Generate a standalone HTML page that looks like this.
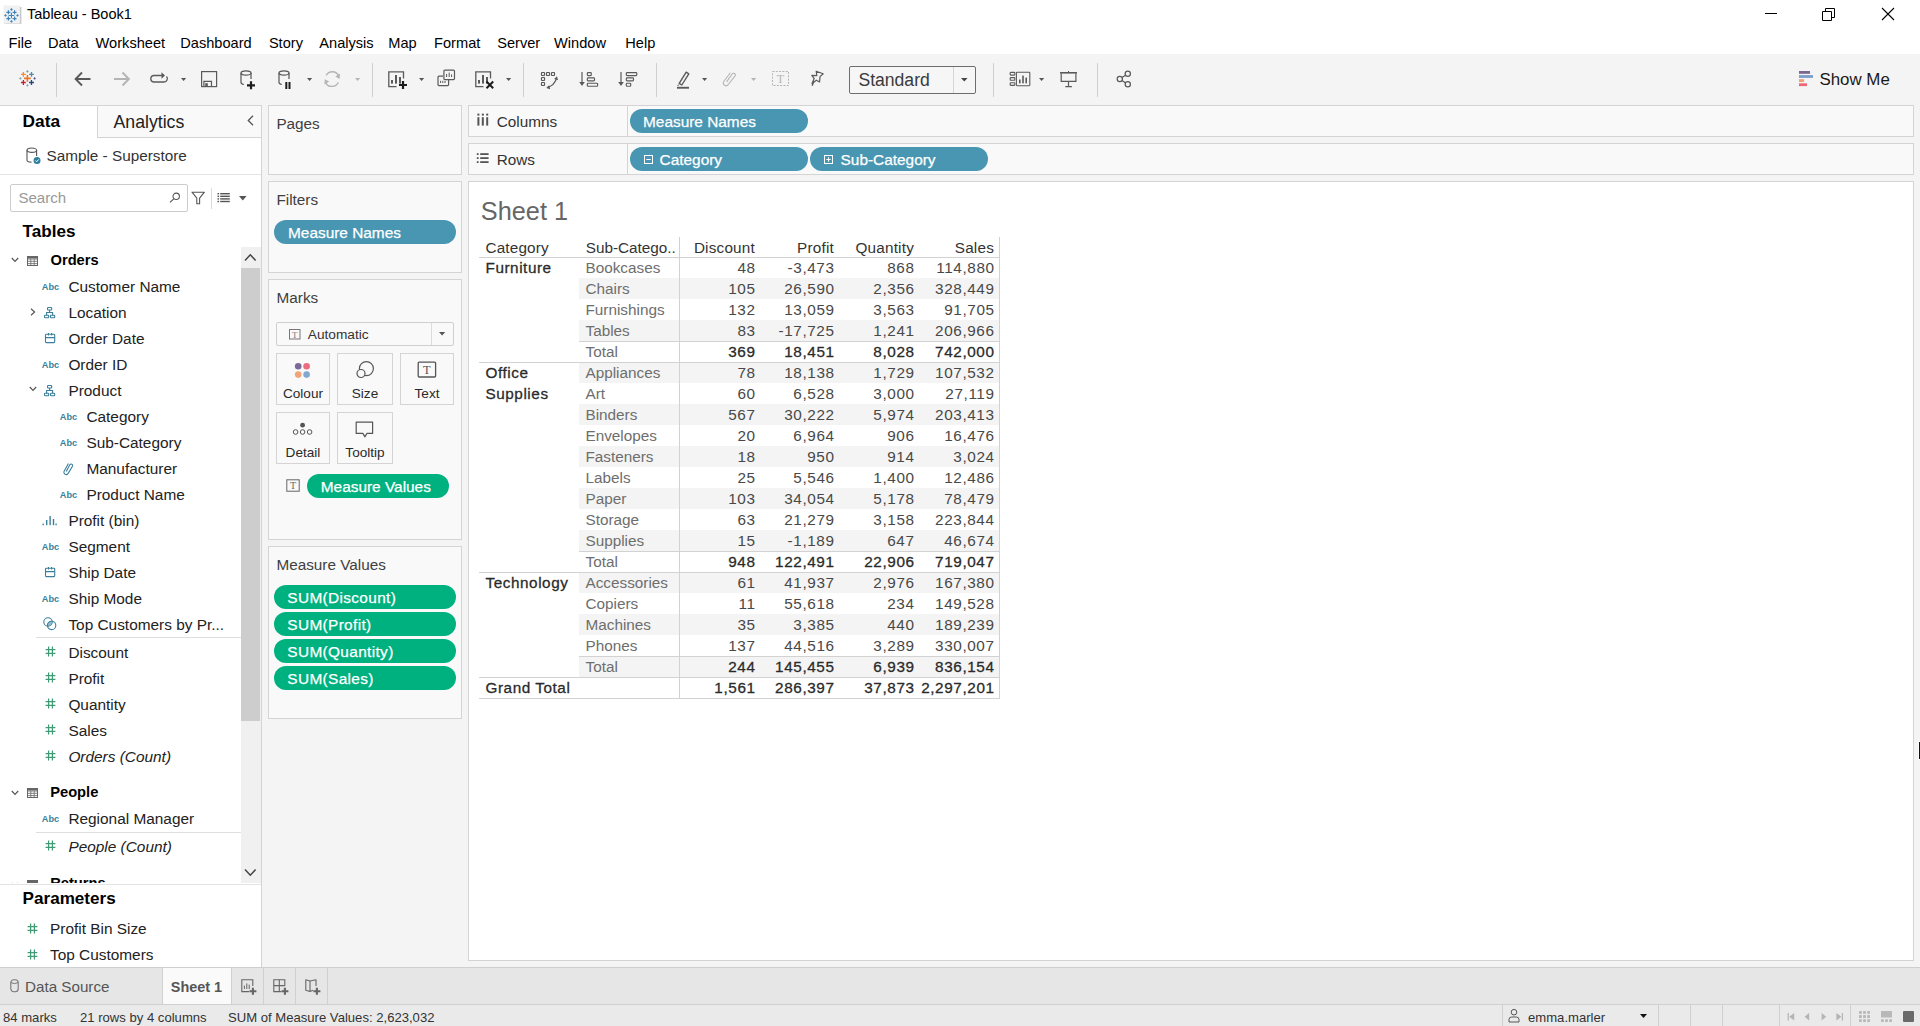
<!DOCTYPE html>
<html><head><meta charset="utf-8"><title>Tableau - Book1</title>
<style>
html,body{margin:0;padding:0;width:1920px;height:1026px;overflow:hidden;background:#ffffff;}
body{position:relative;font-family:"Liberation Sans",sans-serif;}
.t{position:absolute;white-space:nowrap;line-height:1;}
.r{position:absolute;box-sizing:border-box;}
svg.r{overflow:visible;}
</style></head><body>
<div class="r" style="left:0px;top:0px;width:1920px;height:54px;background:#ffffff;"></div>
<svg class="r" style="left:0px;top:2px;" width="24" height="24" viewBox="0 0 24 24"><rect x="4.4" y="5" width="17" height="17" fill="#bdbdbd" opacity="0.8"/><rect x="3.5" y="3.5" width="16.4" height="18" fill="#f1f1f1"/><path d="M8.66 13.46H14.260000000000002M11.46 10.66V16.26" stroke="#3c86bd" stroke-width="1.1"/><path d="M6.4 10.3H10.4M8.4 8.3V12.3" stroke="#3c86bd" stroke-width="1.2"/><path d="M12.6 10.3H16.6M14.6 8.3V12.3" stroke="#3c86bd" stroke-width="1.2"/><path d="M6.4 16.6H10.4M8.4 14.600000000000001V18.6" stroke="#3c86bd" stroke-width="1.2"/><path d="M12.6 16.6H16.6M14.6 14.600000000000001V18.6" stroke="#3c86bd" stroke-width="1.2"/><path d="M10.06 7.5L11.46 6.1L12.860000000000001 7.5L11.46 8.9Z" fill="#3c86bd"/><path d="M10.06 19.4L11.46 18.0L12.860000000000001 19.4L11.46 20.799999999999997Z" fill="#3c86bd"/><path d="M4.1 13.46L5.5 12.06L6.9 13.46L5.5 14.860000000000001Z" fill="#3c86bd"/><path d="M16.1 13.46L17.5 12.06L18.9 13.46L17.5 14.860000000000001Z" fill="#3c86bd"/></svg>
<div class="t" style="left:27px;top:7.32px;font-size:14.5px;color:#000;">Tableau - Book1</div>
<div class="r" style="left:1765px;top:13px;width:12px;height:1px;background:#000;"></div>
<svg class="r" style="left:1822px;top:8px;" width="13" height="13" viewBox="0 0 13 13"><path d="M0.5 3.5h9v9h-9z M3.5 3.5v-3h9v9h-3" fill="none" stroke="#000" stroke-width="1"/></svg>
<svg class="r" style="left:1881px;top:7px;" width="14" height="14" viewBox="0 0 14 14"><path d="M1 1L13 13M13 1L1 13" stroke="#000" stroke-width="1.1"/></svg>
<div class="t" style="left:8.5px;top:35.53px;font-size:14.6px;color:#000;">File</div>
<div class="t" style="left:47.9px;top:35.53px;font-size:14.6px;color:#000;">Data</div>
<div class="t" style="left:95.6px;top:35.53px;font-size:14.6px;color:#000;">Worksheet</div>
<div class="t" style="left:180.3px;top:35.53px;font-size:14.6px;color:#000;">Dashboard</div>
<div class="t" style="left:268.9px;top:35.53px;font-size:14.6px;color:#000;">Story</div>
<div class="t" style="left:319.3px;top:35.53px;font-size:14.6px;color:#000;">Analysis</div>
<div class="t" style="left:388.3px;top:35.53px;font-size:14.6px;color:#000;">Map</div>
<div class="t" style="left:434.1px;top:35.53px;font-size:14.6px;color:#000;">Format</div>
<div class="t" style="left:497.2px;top:35.53px;font-size:14.6px;color:#000;">Server</div>
<div class="t" style="left:554.1px;top:35.53px;font-size:14.6px;color:#000;">Window</div>
<div class="t" style="left:625.3px;top:35.53px;font-size:14.6px;color:#000;">Help</div>
<div class="r" style="left:0px;top:54px;width:1920px;height:914px;background:#f4f4f4;"></div>
<svg class="r" style="left:17px;top:68px;" width="21" height="21" viewBox="0 0 21 21"><path d="M7.0 10.4H13.8M10.4 7.0V13.8" stroke="#e8762d" stroke-width="1.6"/><path d="M4.0 6.4H8.8M6.4 4.0V8.8" stroke="#f28e2b" stroke-width="1.3"/><path d="M12.1 6.4H16.9M14.5 4.0V8.8" stroke="#4e8da6" stroke-width="1.3"/><path d="M4.0 14.5H8.8M6.4 12.1V16.9" stroke="#c72035" stroke-width="1.3"/><path d="M12.1 14.5H16.9M14.5 12.1V16.9" stroke="#1f447e" stroke-width="1.3"/><path d="M9.1 3.4L10.4 2.0999999999999996L11.700000000000001 3.4L10.4 4.7Z" fill="#6e9fb0"/><path d="M9.1 17.4L10.4 16.099999999999998L11.700000000000001 17.4L10.4 18.7Z" fill="#8fa2c4"/><path d="M2.0999999999999996 10.4L3.4 9.1L4.7 10.4L3.4 11.700000000000001Z" fill="#7fa6b5"/><path d="M16.3 10.4L17.6 9.1L18.900000000000002 10.4L17.6 11.700000000000001Z" fill="#59578e"/></svg>
<div class="r" style="left:56px;top:63px;width:1px;height:34px;background:#d0d0d0;"></div>
<svg class="r" style="left:74px;top:71px;" width="18" height="16" viewBox="0 0 18 16"><path d="M16.5 8H2M8 1.5L1.6 8L8 14.5" fill="none" stroke="#595959" stroke-width="1.9"/></svg>
<svg class="r" style="left:113px;top:71px;" width="18" height="16" viewBox="0 0 18 16"><path d="M1 8H15.5M9.5 1.5L15.9 8L9.5 14.5" fill="none" stroke="#b4b4b4" stroke-width="1.9"/></svg>
<svg class="r" style="left:149px;top:71px;" width="21" height="13" viewBox="0 0 21 13"><path d="M13 4.5H4.5A3.3 3.3 0 0 0 4.5 11H15A3.3 3.3 0 0 0 17.5 5.5" fill="none" stroke="#5a5a5a" stroke-width="1.3"/><path d="M12.5 1.2L16 4.5L12.5 7.8Z" fill="#5a5a5a"/></svg>
<svg class="r" style="left:181px;top:78px;" width="5.2" height="3" viewBox="0 0 5.2 3"><path d="M0 0H5.2L2.6 3Z" fill="#555555"/></svg>
<svg class="r" style="left:200px;top:70px;" width="18" height="18" viewBox="0 0 18 18"><rect x="1.6" y="1.6" width="15" height="15" fill="none" stroke="#5a5a5a" stroke-width="1.2"/><path d="M3.9 16.6V11.4H11.5V16.6" fill="none" stroke="#5a5a5a" stroke-width="1.2"/><rect x="5.2" y="13.2" width="2.6" height="3" fill="#5a5a5a"/></svg>
<svg class="r" style="left:240px;top:70px;" width="17" height="20" viewBox="0 0 17 20"><ellipse cx="6" cy="3" rx="5" ry="2.2" fill="none" stroke="#555" stroke-width="1.2"/><path d="M1 3V12.5A5 2.2 0 0 0 3.8 14.5M11 3V9" fill="none" stroke="#555" stroke-width="1.2"/><path d="M7 15.3H15M11 11.3V19.3" stroke="#1c1c1c" stroke-width="2.2"/></svg>
<svg class="r" style="left:278px;top:70px;" width="15" height="20" viewBox="0 0 15 20"><ellipse cx="6" cy="3" rx="5" ry="2.2" fill="none" stroke="#555" stroke-width="1.2"/><path d="M1 3V12.5A5 2.2 0 0 0 3.8 14.5M11 3V9" fill="none" stroke="#555" stroke-width="1.2"/><rect x="7.3" y="12" width="2" height="7" fill="#1c1c1c"/><rect x="10.5" y="12" width="2" height="7" fill="#1c1c1c"/></svg>
<svg class="r" style="left:307px;top:78px;" width="5.2" height="3" viewBox="0 0 5.2 3"><path d="M0 0H5.2L2.6 3Z" fill="#555555"/></svg>
<svg class="r" style="left:323px;top:70px;" width="19" height="18" viewBox="0 0 19 18"><path d="M3.2 5.4A7 7 0 0 1 15.6 5.6M15.3 12.2A7 7 0 0 1 2.6 12.6" fill="none" stroke="#b4b4b4" stroke-width="1.3"/><path d="M17 3.6L16.6 9L12.4 6.6Z M1.5 14.5L1.7 9.2L6.2 11.4Z" fill="#b4b4b4"/></svg>
<svg class="r" style="left:355px;top:78px;" width="5.2" height="3" viewBox="0 0 5.2 3"><path d="M0 0H5.2L2.6 3Z" fill="#b4b4b4"/></svg>
<div class="r" style="left:372px;top:63px;width:1px;height:34px;background:#d0d0d0;"></div>
<svg class="r" style="left:388px;top:71px;" width="20" height="19" viewBox="0 0 20 19"><path d="M8.5 15.6H0.8V0.8H15.5V7.5" fill="none" stroke="#5a5a5a" stroke-width="1.3"/><rect x="3" y="9" width="2" height="3.6" fill="#5a5a5a"/><rect x="7" y="4" width="2" height="8.6" fill="#5a5a5a"/><rect x="11" y="6" width="2" height="6.6" fill="#5a5a5a"/><path d="M11 14H19M15 10V18" stroke="#1c1c1c" stroke-width="2.2"/></svg>
<svg class="r" style="left:419px;top:78px;" width="5.2" height="3" viewBox="0 0 5.2 3"><path d="M0 0H5.2L2.6 3Z" fill="#555555"/></svg>
<svg class="r" style="left:437px;top:69px;" width="19" height="18" viewBox="0 0 19 18"><rect x="6.9" y="1.2" width="10.6" height="9.4" rx="1" fill="none" stroke="#5a5a5a" stroke-width="1.2"/><path d="M6 7.2H2a1 1 0 0 0-1 1V15.6a1 1 0 0 0 1 1H10.6a1 1 0 0 0 1-1V10.6" fill="none" stroke="#5a5a5a" stroke-width="1.2"/><path d="M9.6 8V5M12.2 8V3.6M14.6 8V5.4M3.6 14V11.8M5.8 14V11.8M8 14V11.8" stroke="#5a5a5a" stroke-width="1"/></svg>
<svg class="r" style="left:475px;top:71px;" width="20" height="19" viewBox="0 0 20 19"><path d="M8.5 15.6H0.8V0.8H15.5V7.5" fill="none" stroke="#5a5a5a" stroke-width="1.3"/><rect x="3" y="9" width="2" height="3.6" fill="#5a5a5a"/><rect x="7" y="4" width="2" height="8.6" fill="#5a5a5a"/><rect x="11" y="6" width="2" height="6.6" fill="#5a5a5a"/><path d="M11.5 10.5L18.2 17.2M18.2 10.5L11.5 17.2" stroke="#1c1c1c" stroke-width="2"/></svg>
<svg class="r" style="left:506px;top:78px;" width="5.2" height="3" viewBox="0 0 5.2 3"><path d="M0 0H5.2L2.6 3Z" fill="#555555"/></svg>
<div class="r" style="left:523px;top:63px;width:1px;height:34px;background:#d0d0d0;"></div>
<svg class="r" style="left:540px;top:71px;" width="19" height="19" viewBox="0 0 19 19"><rect x="1.5" y="1.5" width="3" height="3" fill="none" stroke="#5a5a5a" stroke-width="1.2" rx="0.5"/><rect x="6.5" y="1.5" width="3" height="3" fill="none" stroke="#5a5a5a" stroke-width="1.2" rx="0.5"/><rect x="11.5" y="1.5" width="3" height="3" fill="none" stroke="#5a5a5a" stroke-width="1.2" rx="0.5"/><rect x="1.5" y="6.5" width="3" height="3" fill="none" stroke="#5a5a5a" stroke-width="1.2" rx="0.5"/><rect x="1.5" y="11.5" width="3" height="3" fill="none" stroke="#5a5a5a" stroke-width="1.2" rx="0.5"/><path d="M7.6 16.4Q14.2 14.4 16.4 7.6" fill="none" stroke="#5a5a5a" stroke-width="1.3"/><path d="M14.2 8L17 5.2L18 9.2Z M9.2 14.2L6.2 17L10.2 18.2Z" fill="#5a5a5a"/></svg>
<svg class="r" style="left:579px;top:71px;" width="20" height="16" viewBox="0 0 20 16"><path d="M3 1V13" stroke="#5a5a5a" stroke-width="1.2"/><path d="M0.2 11L3 15L5.8 11Z" fill="#5a5a5a"/><rect x="8.3" y="1.6" width="4" height="3" rx="0.8" fill="none" stroke="#5a5a5a" stroke-width="1.15"/><rect x="8.3" y="6.9" width="7.2" height="3" rx="0.8" fill="none" stroke="#5a5a5a" stroke-width="1.15"/><rect x="8.3" y="12.2" width="10.3" height="3" rx="0.8" fill="none" stroke="#5a5a5a" stroke-width="1.15"/></svg>
<svg class="r" style="left:618px;top:71px;" width="20" height="16" viewBox="0 0 20 16"><path d="M3 1V13" stroke="#5a5a5a" stroke-width="1.2"/><path d="M0.2 11L3 15L5.8 11Z" fill="#5a5a5a"/><rect x="8.3" y="1.6" width="10.5" height="3" rx="0.8" fill="none" stroke="#5a5a5a" stroke-width="1.15"/><rect x="8.3" y="6.9" width="7.2" height="3" rx="0.8" fill="none" stroke="#5a5a5a" stroke-width="1.15"/><rect x="8.3" y="12.2" width="4.4" height="3" rx="0.8" fill="none" stroke="#5a5a5a" stroke-width="1.15"/></svg>
<div class="r" style="left:656px;top:63px;width:1px;height:34px;background:#d0d0d0;"></div>
<svg class="r" style="left:676px;top:70px;" width="14" height="20" viewBox="0 0 14 20"><path d="M3.2 13.4L10.2 2.2L12.8 3.8L5.8 15Z" fill="none" stroke="#5a5a5a" stroke-width="1.4" stroke-linejoin="round"/><path d="M2.6 14.5L1.6 16" stroke="#5a5a5a" stroke-width="1"/><rect x="1" y="16.8" width="12" height="1.9" fill="#5a5a5a"/></svg>
<svg class="r" style="left:702px;top:78px;" width="5.2" height="3" viewBox="0 0 5.2 3"><path d="M0 0H5.2L2.6 3Z" fill="#555555"/></svg>
<svg class="r" style="left:722px;top:70px;" width="14" height="17" viewBox="0 0 14 17"><path d="M5.2 12.2L9.6 3.6A1.7 1.7 0 0 1 12.7 5L7.2 14.5A2.7 2.7 0 0 1 2.3 12.2L7.6 2.6" fill="none" stroke="#b4b4b4" stroke-width="1.1" transform="rotate(8 7 8)"/></svg>
<svg class="r" style="left:751px;top:78px;" width="5.2" height="3" viewBox="0 0 5.2 3"><path d="M0 0H5.2L2.6 3Z" fill="#b4b4b4"/></svg>
<svg class="r" style="left:771px;top:70px;" width="19" height="17" viewBox="0 0 19 17"><rect x="1.5" y="1.5" width="16" height="14" fill="none" stroke="#b4b4b4" stroke-width="1" stroke-dasharray="2 1.3"/><text x="9.5" y="12.6" text-anchor="middle" font-family="Liberation Serif" font-size="12" fill="#b4b4b4">T</text></svg>
<svg class="r" style="left:810px;top:70px;" width="15" height="17" viewBox="0 0 15 17"><path d="M6.2 1.2L13.2 3.8L10 6.6L9.6 12L6.4 10.2L2 13.6L4.2 8.6L1.8 5.4L6.8 5.6Z" fill="none" stroke="#5a5a5a" stroke-width="1.2" stroke-linejoin="round"/><path d="M4 10.8L2.2 15.8" stroke="#5a5a5a" stroke-width="1.3"/></svg>
<div class="r" style="left:849px;top:66px;width:127px;height:28px;background:#f6f6f6;border:1px solid #6e6e6e;box-sizing:border-box;border-radius:2px;"></div>
<div class="r" style="left:953px;top:67px;width:1px;height:26px;background:#d6d6d6;"></div>
<div class="t" style="left:858.4px;top:71.99px;font-size:17.6px;color:#3a3a3a;">Standard</div>
<svg class="r" style="left:961px;top:78.4px;" width="6.6" height="3.4" viewBox="0 0 6.6 3.4"><path d="M0 0H6.6L3.3 3.4Z" fill="#444"/></svg>
<div class="r" style="left:993px;top:63px;width:1px;height:34px;background:#d0d0d0;"></div>
<svg class="r" style="left:1009px;top:71px;" width="22" height="16" viewBox="0 0 22 16"><g fill="none" stroke="#5a5a5a" stroke-width="1.1"><rect x="1.2" y="1.4" width="4.6" height="2.7" rx="0.6"/><rect x="1.2" y="6.6" width="4.6" height="2.7" rx="0.6"/><rect x="1.2" y="11.7" width="4.6" height="2.7" rx="0.6"/><rect x="7.4" y="1.2" width="13.4" height="13.5" rx="0.6"/></g><rect x="10" y="8.5" width="1.6" height="3.8" fill="#5a5a5a"/><rect x="13.2" y="4.6" width="1.6" height="7.7" fill="#5a5a5a"/><rect x="16.4" y="6.6" width="1.6" height="5.7" fill="#5a5a5a"/></svg>
<svg class="r" style="left:1039px;top:78px;" width="5.2" height="3" viewBox="0 0 5.2 3"><path d="M0 0H5.2L2.6 3Z" fill="#555555"/></svg>
<svg class="r" style="left:1059px;top:70px;" width="19" height="18" viewBox="0 0 19 18"><rect x="1" y="2" width="17" height="1.6" fill="#5a5a5a"/><path d="M2.2 3.4V11.3H16.9V3.4M9.5 11.3V16.6M6.3 16.6H12.9" fill="none" stroke="#5a5a5a" stroke-width="1.2"/><path d="M9.5 1V2" stroke="#5a5a5a" stroke-width="1"/></svg>
<div class="r" style="left:1097px;top:63px;width:1px;height:34px;background:#d0d0d0;"></div>
<svg class="r" style="left:1116px;top:70px;" width="16" height="18" viewBox="0 0 16 18"><g fill="none" stroke="#5a5a5a" stroke-width="1.25"><circle cx="11.8" cy="3.8" r="2.6"/><circle cx="3.8" cy="9" r="2.6"/><circle cx="11.8" cy="14.3" r="2.6"/><path d="M6 7.6L9.6 5.2M6 10.4L9.6 12.9"/></g></svg>
<svg class="r" style="left:1799px;top:71px;" width="16" height="16" viewBox="0 0 16 16"><rect x="0" y="0" width="11" height="2.8" fill="#7a6892"/><rect x="0" y="4.1" width="14" height="2.8" fill="#7b9fca"/><rect x="0" y="8.2" width="5" height="2.8" fill="#f0a072"/><rect x="0" y="12.3" width="8" height="2.8" fill="#ee6577"/></svg>
<div class="t" style="left:1819.4px;top:72.09px;font-size:16.9px;color:#1a1a1a;">Show Me</div>
<div class="r" style="left:0px;top:105px;width:262px;height:1px;background:#d4d4d4;"></div>
<div class="r" style="left:0px;top:106px;width:261px;height:861px;background:#ffffff;"></div>
<div class="r" style="left:261px;top:105px;width:1px;height:862px;background:#d4d4d4;"></div>
<div class="r" style="left:97px;top:106px;width:164px;height:31px;background:#f9f9f9;"></div>
<div class="r" style="left:97px;top:106px;width:1px;height:32px;background:#d4d4d4;"></div>
<div class="r" style="left:97px;top:137px;width:164px;height:1px;background:#d4d4d4;"></div>
<div class="t" style="left:22.6px;top:112.85px;font-size:17.3px;color:#000;font-weight:700;">Data</div>
<div class="t" style="left:113.5px;top:114.21px;font-size:17.7px;color:#222;">Analytics</div>
<svg class="r" style="left:247px;top:115px;" width="7" height="11" viewBox="0 0 7 11"><path d="M6 0.8L1.3 5.5L6 10.2" fill="none" stroke="#555" stroke-width="1.3"/></svg>
<svg class="r" style="left:26px;top:147px;" width="15" height="17" viewBox="0 0 15 17"><path d="M1 3.2V13.2A4.8 1.9 0 0 0 5.5 15.1M10.6 3.2V9" fill="none" stroke="#555" stroke-width="1.1"/><ellipse cx="5.8" cy="3.2" rx="4.8" ry="2.2" fill="none" stroke="#555" stroke-width="1.1"/><circle cx="11" cy="13.5" r="3.5" fill="#2e7ea0"/><path d="M9.3 13.5L10.6 14.8L12.8 12.4" fill="none" stroke="#fff" stroke-width="1"/></svg>
<div class="t" style="left:46.5px;top:147.64px;font-size:15.3px;color:#333;">Sample - Superstore</div>
<div class="r" style="left:0px;top:174px;width:261px;height:1px;background:#e3e3e3;"></div>
<div class="r" style="left:10px;top:184px;width:178px;height:28px;background:#ffffff;border:1px solid #cccccc;box-sizing:border-box;border-radius:2px;"></div>
<div class="t" style="left:18.4px;top:190.21px;font-size:15.1px;color:#999;">Search</div>
<svg class="r" style="left:169px;top:192px;" width="12" height="11" viewBox="0 0 12 11"><circle cx="7.2" cy="4.3" r="3.2" fill="none" stroke="#555" stroke-width="1.1"/><path d="M5 6.6L1 10.4" stroke="#555" stroke-width="1.2"/></svg>
<svg class="r" style="left:191px;top:191px;" width="15" height="14" viewBox="0 0 15 14"><path d="M1 1.2H13.4L8.6 7.2V12.8H5.8V7.2Z" fill="none" stroke="#555" stroke-width="1.1" stroke-linejoin="round"/></svg>
<div class="r" style="left:211px;top:188px;width:1px;height:21px;background:#dadada;"></div>
<svg class="r" style="left:217px;top:192px;" width="14" height="11" viewBox="0 0 14 11"><rect x="0.5" y="1" width="1.6" height="1.4" fill="#555"/><rect x="3.2" y="1" width="9.6" height="1.4" fill="#555"/><rect x="0.5" y="3.6" width="1.6" height="1.4" fill="#555"/><rect x="3.2" y="3.6" width="9.6" height="1.4" fill="#555"/><rect x="0.5" y="6.2" width="1.6" height="1.4" fill="#555"/><rect x="3.2" y="6.2" width="9.6" height="1.4" fill="#555"/><rect x="0.5" y="8.8" width="1.6" height="1.4" fill="#555"/><rect x="3.2" y="8.8" width="9.6" height="1.4" fill="#555"/></svg>
<svg class="r" style="left:238.6px;top:195.8px;" width="7.6" height="4.6" viewBox="0 0 7.6 4.6"><path d="M0 0H7.6L3.8 4.6Z" fill="#555"/></svg>
<div class="t" style="left:22.6px;top:222.72px;font-size:17.1px;color:#000;font-weight:700;">Tables</div>
<div class="r" style="left:241px;top:247px;width:20px;height:636px;background:#f0f0f0;"></div>
<div class="r" style="left:241px;top:268px;width:19px;height:453px;background:#cdcdcd;"></div>
<svg class="r" style="left:244px;top:253px;" width="13" height="9" viewBox="0 0 13 9"><path d="M1 7.4L6.3 1.8L11.6 7.4" fill="none" stroke="#444" stroke-width="1.5"/></svg>
<svg class="r" style="left:244px;top:868px;" width="13" height="9" viewBox="0 0 13 9"><path d="M1 1.6L6.3 7.2L11.6 1.6" fill="none" stroke="#444" stroke-width="1.5"/></svg>
<svg class="r" style="left:10.6px;top:257.4px;" width="8" height="6" viewBox="0 0 8 6"><path d="M0.8 1L4 4.4L7.2 1" fill="none" stroke="#555" stroke-width="1.2"/></svg>
<svg class="r" style="left:26.6px;top:255.6px;" width="11" height="10" viewBox="0 0 11 10"><g fill="none" stroke="#666" stroke-width="1"><rect x="0.5" y="0.5" width="10" height="9"/></g><path d="M0.5 3H10.5M0.5 5.3H10.5M0.5 7.6H10.5M3.8 3V9.5M7.2 3V9.5" stroke="#666" stroke-width="0.8"/><rect x="0.5" y="0.5" width="10" height="2" fill="#666"/></svg>
<div class="t" style="left:50.5px;top:252.55px;font-size:14.7px;color:#000;font-weight:700;">Orders</div>
<div class="t" style="left:41.8px;top:282.61px;font-size:9.2px;color:#3a7f9c;font-weight:700;letter-spacing:0px;">Abc</div>
<div class="t" style="left:68.4px;top:278.96px;font-size:15.4px;color:#222;">Customer Name</div>
<svg class="r" style="left:44px;top:307px;" width="12" height="12" viewBox="0 0 12 12"><g fill="none" stroke="#3a7f9c" stroke-width="1.1"><rect x="3.5" y="0.5" width="4.2" height="2.5" rx="0.7"/><rect x="0.5" y="8.3" width="4.2" height="2.4" rx="0.7"/><rect x="6.5" y="8.3" width="4.2" height="2.4" rx="0.7"/><path d="M5.6 3V5.5M2.6 8.3V5.5H8.6V8.3"/></g></svg>
<div class="t" style="left:68.4px;top:304.96px;font-size:15.4px;color:#222;">Location</div>
<svg class="r" style="left:45px;top:333px;" width="11" height="11" viewBox="0 0 11 11"><g fill="none" stroke="#3a7f9c" stroke-width="1.1"><rect x="0.5" y="1.2" width="9.2" height="8.4" rx="0.8"/><path d="M0.5 4.6H9.7M3.5 0V2.4M6.6 0V2.4"/></g></svg>
<div class="t" style="left:68.4px;top:330.96px;font-size:15.4px;color:#222;">Order Date</div>
<div class="t" style="left:41.8px;top:360.61px;font-size:9.2px;color:#3a7f9c;font-weight:700;letter-spacing:0px;">Abc</div>
<div class="t" style="left:68.4px;top:356.96px;font-size:15.4px;color:#222;">Order ID</div>
<svg class="r" style="left:44px;top:385px;" width="12" height="12" viewBox="0 0 12 12"><g fill="none" stroke="#3a7f9c" stroke-width="1.1"><rect x="3.5" y="0.5" width="4.2" height="2.5" rx="0.7"/><rect x="0.5" y="8.3" width="4.2" height="2.4" rx="0.7"/><rect x="6.5" y="8.3" width="4.2" height="2.4" rx="0.7"/><path d="M5.6 3V5.5M2.6 8.3V5.5H8.6V8.3"/></g></svg>
<div class="t" style="left:68.4px;top:382.96px;font-size:15.4px;color:#222;">Product</div>
<div class="t" style="left:59.8px;top:412.61px;font-size:9.2px;color:#3a7f9c;font-weight:700;letter-spacing:0px;">Abc</div>
<div class="t" style="left:86.4px;top:408.96px;font-size:15.4px;color:#222;">Category</div>
<div class="t" style="left:59.8px;top:438.61px;font-size:9.2px;color:#3a7f9c;font-weight:700;letter-spacing:0px;">Abc</div>
<div class="t" style="left:86.4px;top:434.96px;font-size:15.4px;color:#222;">Sub-Category</div>
<svg class="r" style="left:62.4px;top:462px;" width="12" height="13" viewBox="0 0 12 13"><path d="M4.2 9.4L8 2.6A1.5 1.5 0 0 1 10.6 4L6 11.6A2.3 2.3 0 0 1 2 9.4L6.4 1.6" fill="none" stroke="#3a7f9c" stroke-width="1.1"/></svg>
<div class="t" style="left:86.4px;top:460.96px;font-size:15.4px;color:#222;">Manufacturer</div>
<div class="t" style="left:59.8px;top:490.61px;font-size:9.2px;color:#3a7f9c;font-weight:700;letter-spacing:0px;">Abc</div>
<div class="t" style="left:86.4px;top:486.96px;font-size:15.4px;color:#222;">Product Name</div>
<svg class="r" style="left:41.8px;top:515px;" width="15" height="11" viewBox="0 0 15 11"><g fill="#3a7f9c"><rect x="0.5" y="8.6" width="1.4" height="1.6"/><rect x="4" y="5" width="1.4" height="5.2"/><rect x="7.4" y="1" width="1.4" height="9.2"/><rect x="10.8" y="4" width="1.4" height="6.2"/><rect x="13.4" y="8.6" width="1.4" height="1.6"/></g></svg>
<div class="t" style="left:68.4px;top:512.96px;font-size:15.4px;color:#222;">Profit (bin)</div>
<div class="t" style="left:41.8px;top:542.61px;font-size:9.2px;color:#3a7f9c;font-weight:700;letter-spacing:0px;">Abc</div>
<div class="t" style="left:68.4px;top:538.96px;font-size:15.4px;color:#222;">Segment</div>
<svg class="r" style="left:45px;top:567px;" width="11" height="11" viewBox="0 0 11 11"><g fill="none" stroke="#3a7f9c" stroke-width="1.1"><rect x="0.5" y="1.2" width="9.2" height="8.4" rx="0.8"/><path d="M0.5 4.6H9.7M3.5 0V2.4M6.6 0V2.4"/></g></svg>
<div class="t" style="left:68.4px;top:564.96px;font-size:15.4px;color:#222;">Ship Date</div>
<div class="t" style="left:41.8px;top:594.61px;font-size:9.2px;color:#3a7f9c;font-weight:700;letter-spacing:0px;">Abc</div>
<div class="t" style="left:68.4px;top:590.96px;font-size:15.4px;color:#222;">Ship Mode</div>
<svg class="r" style="left:43.4px;top:617px;" width="15" height="14" viewBox="0 0 15 14"><path d="M8.6 4.2A4.2 4.2 0 0 1 4.4 9.2A4.2 4.2 0 0 1 8.6 4.2Z" fill="#3a7f9c" opacity="0.55"/><g fill="none" stroke="#3a7f9c" stroke-width="1.1"><circle cx="5" cy="5" r="4.2"/><circle cx="8.6" cy="8.4" r="4.2"/></g></svg>
<div class="t" style="left:68.4px;top:616.96px;font-size:15.4px;color:#222;">Top Customers by Pr...</div>
<svg class="r" style="left:45.0px;top:646.4px;" width="11" height="11" viewBox="0 0 11 11"><path d="M3.6 0.5V10.5M7.4 0.5V10.5M0.6 3.6H10.4M0.6 7.3H10.4" stroke="#3f9b74" stroke-width="1.2"/></svg>
<div class="t" style="left:68.4px;top:644.96px;font-size:15.4px;color:#222;">Discount</div>
<svg class="r" style="left:45.0px;top:672.4px;" width="11" height="11" viewBox="0 0 11 11"><path d="M3.6 0.5V10.5M7.4 0.5V10.5M0.6 3.6H10.4M0.6 7.3H10.4" stroke="#3f9b74" stroke-width="1.2"/></svg>
<div class="t" style="left:68.4px;top:670.96px;font-size:15.4px;color:#222;">Profit</div>
<svg class="r" style="left:45.0px;top:698.4px;" width="11" height="11" viewBox="0 0 11 11"><path d="M3.6 0.5V10.5M7.4 0.5V10.5M0.6 3.6H10.4M0.6 7.3H10.4" stroke="#3f9b74" stroke-width="1.2"/></svg>
<div class="t" style="left:68.4px;top:696.96px;font-size:15.4px;color:#222;">Quantity</div>
<svg class="r" style="left:45.0px;top:724.4px;" width="11" height="11" viewBox="0 0 11 11"><path d="M3.6 0.5V10.5M7.4 0.5V10.5M0.6 3.6H10.4M0.6 7.3H10.4" stroke="#3f9b74" stroke-width="1.2"/></svg>
<div class="t" style="left:68.4px;top:722.96px;font-size:15.4px;color:#222;">Sales</div>
<svg class="r" style="left:45.0px;top:750.4px;" width="11" height="11" viewBox="0 0 11 11"><path d="M3.6 0.5V10.5M7.4 0.5V10.5M0.6 3.6H10.4M0.6 7.3H10.4" stroke="#3f9b74" stroke-width="1.2"/></svg>
<div class="t" style="left:68.4px;top:748.96px;font-size:15.4px;color:#222;font-style:italic;">Orders (Count)</div>
<div class="t" style="left:41.8px;top:814.61px;font-size:9.2px;color:#3a7f9c;font-weight:700;letter-spacing:0px;">Abc</div>
<div class="t" style="left:68.4px;top:810.96px;font-size:15.4px;color:#222;">Regional Manager</div>
<svg class="r" style="left:45.0px;top:840.4px;" width="11" height="11" viewBox="0 0 11 11"><path d="M3.6 0.5V10.5M7.4 0.5V10.5M0.6 3.6H10.4M0.6 7.3H10.4" stroke="#3f9b74" stroke-width="1.2"/></svg>
<div class="t" style="left:68.4px;top:838.96px;font-size:15.4px;color:#222;font-style:italic;">People (Count)</div>
<svg class="r" style="left:30px;top:308px;" width="6" height="8" viewBox="0 0 6 8"><path d="M1 0.8L4.6 4L1 7.2" fill="none" stroke="#555" stroke-width="1.2"/></svg>
<svg class="r" style="left:28.8px;top:386.4px;" width="8" height="6" viewBox="0 0 8 6"><path d="M0.8 1L4 4.4L7.2 1" fill="none" stroke="#555" stroke-width="1.2"/></svg>
<div class="r" style="left:36px;top:637px;width:205px;height:1px;background:#dedede;"></div>
<div class="r" style="left:36px;top:832px;width:205px;height:1px;background:#dedede;"></div>
<svg class="r" style="left:10.6px;top:790px;" width="8" height="6" viewBox="0 0 8 6"><path d="M0.8 1L4 4.4L7.2 1" fill="none" stroke="#555" stroke-width="1.2"/></svg>
<svg class="r" style="left:26.6px;top:788.4px;" width="11" height="10" viewBox="0 0 11 10"><g fill="none" stroke="#666" stroke-width="1"><rect x="0.5" y="0.5" width="10" height="9"/></g><path d="M0.5 3H10.5M0.5 5.3H10.5M0.5 7.6H10.5M3.8 3V9.5M7.2 3V9.5" stroke="#666" stroke-width="0.8"/><rect x="0.5" y="0.5" width="10" height="2" fill="#666"/></svg>
<div class="t" style="left:50.2px;top:785.25px;font-size:14.7px;color:#000;font-weight:700;">People</div>
<div class="r" style="left:0;top:870px;width:241px;height:13px;overflow:hidden">
<div class="t" style="left:50.2px;top:6.45px;font-size:14.7px;color:#000;font-weight:700">Returns</div>
<svg class="r" style="left:10.6px;top:11.5px" width="8" height="6" viewBox="0 0 8 6"><path d="M0.8 1L4 4.4L7.2 1" fill="none" stroke="#555" stroke-width="1.2"/></svg>
<svg class="r" style="left:26.6px;top:10.0px" width="11" height="10" viewBox="0 0 11 10"><rect x="0.5" y="0.5" width="10" height="9" fill="none" stroke="#666"/><rect x="0.5" y="0.5" width="10" height="2.5" fill="#666"/></svg>
</div>
<div class="r" style="left:0px;top:884px;width:261px;height:1px;background:#e3e3e3;"></div>
<div class="t" style="left:22.6px;top:889.52px;font-size:17.1px;color:#000;font-weight:700;">Parameters</div>
<svg class="r" style="left:26.8px;top:922.6px;" width="11" height="11" viewBox="0 0 11 11"><path d="M3.6 0.5V10.5M7.4 0.5V10.5M0.6 3.6H10.4M0.6 7.3H10.4" stroke="#3f9b74" stroke-width="1.2"/></svg>
<div class="t" style="left:50px;top:921.26px;font-size:15.4px;color:#222;">Profit Bin Size</div>
<svg class="r" style="left:26.8px;top:948.6px;" width="11" height="11" viewBox="0 0 11 11"><path d="M3.6 0.5V10.5M7.4 0.5V10.5M0.6 3.6H10.4M0.6 7.3H10.4" stroke="#3f9b74" stroke-width="1.2"/></svg>
<div class="t" style="left:50px;top:947.16px;font-size:15.4px;color:#222;">Top Customers</div>
<div class="r" style="left:268px;top:105px;width:194px;height:70px;background:#f9f9f9;border:1px solid #d4d4d4;box-sizing:border-box;"></div>
<div class="t" style="left:276.4px;top:116.04px;font-size:15.3px;color:#404040;">Pages</div>
<div class="r" style="left:268px;top:181px;width:194px;height:92px;background:#f9f9f9;border:1px solid #d4d4d4;box-sizing:border-box;"></div>
<div class="t" style="left:276.4px;top:192.04px;font-size:15.3px;color:#404040;">Filters</div>
<div class="r" style="left:274px;top:220px;width:182px;height:24px;background:#4996b2;border-radius:12.0px;"></div>
<div class="t" style="left:288px;top:224.56px;font-size:15.4px;color:#ffffff;-webkit-text-stroke:0.25px #ffffff;letter-spacing:0px;">Measure Names</div>
<div class="r" style="left:268px;top:279px;width:194px;height:261px;background:#f9f9f9;border:1px solid #d4d4d4;box-sizing:border-box;"></div>
<div class="t" style="left:276.6px;top:290.04px;font-size:15.3px;color:#404040;">Marks</div>
<div class="r" style="left:276px;top:322px;width:178px;height:24px;background:#f9f9f9;border:1px solid #cfcfcf;box-sizing:border-box;border-radius:2px;"></div>
<div class="r" style="left:431px;top:323px;width:1px;height:22px;background:#dcdcdc;"></div>
<svg class="r" style="left:439.4px;top:332.2px;" width="6.2" height="3.6" viewBox="0 0 6.2 3.6"><path d="M0 0H6.2L3.1 3.6Z" fill="#555"/></svg>
<svg class="r" style="left:289px;top:329px;" width="12" height="11" viewBox="0 0 12 11"><rect x="0.5" y="0.5" width="10.5" height="9.5" fill="none" stroke="#777" stroke-width="1"/><text x="5.75" y="8.6" text-anchor="middle" font-family="Liberation Serif" font-size="9" fill="#777">T</text></svg>
<div class="t" style="left:307.8px;top:328.20px;font-size:13.7px;color:#333;">Automatic</div>
<div class="r" style="left:276px;top:353px;width:54px;height:52px;background:#f9f9f9;border:1px solid #d4d4d4;box-sizing:border-box;"></div>
<div class="t" style="left:3.0px;width:600px;text-align:center;top:387.48px;font-size:13.6px;color:#2a2a2a;">Colour</div>
<div class="r" style="left:337px;top:353px;width:56px;height:52px;background:#f9f9f9;border:1px solid #d4d4d4;box-sizing:border-box;"></div>
<div class="t" style="left:65.0px;width:600px;text-align:center;top:387.48px;font-size:13.6px;color:#2a2a2a;">Size</div>
<div class="r" style="left:400px;top:353px;width:54px;height:52px;background:#f9f9f9;border:1px solid #d4d4d4;box-sizing:border-box;"></div>
<div class="t" style="left:127.0px;width:600px;text-align:center;top:387.48px;font-size:13.6px;color:#2a2a2a;">Text</div>
<div class="r" style="left:276px;top:412px;width:54px;height:52px;background:#f9f9f9;border:1px solid #d4d4d4;box-sizing:border-box;"></div>
<div class="t" style="left:3.0px;width:600px;text-align:center;top:446.48px;font-size:13.6px;color:#2a2a2a;">Detail</div>
<div class="r" style="left:337px;top:412px;width:56px;height:52px;background:#f9f9f9;border:1px solid #d4d4d4;box-sizing:border-box;"></div>
<div class="t" style="left:65.0px;width:600px;text-align:center;top:446.48px;font-size:13.6px;color:#2a2a2a;">Tooltip</div>
<svg class="r" style="left:294px;top:361.5px;" width="17" height="17" viewBox="0 0 17 17"><circle cx="4.2" cy="4.2" r="3.3" fill="#7b6798"/><circle cx="12.6" cy="4.2" r="3.3" fill="#eb6b7f"/><circle cx="4.2" cy="12.6" r="3.3" fill="#f1a47a"/><circle cx="12.6" cy="12.6" r="3.3" fill="#82a8d2"/></svg>
<svg class="r" style="left:355px;top:360px;" width="20" height="19" viewBox="0 0 20 19"><circle cx="11.4" cy="8.6" r="7" fill="none" stroke="#555" stroke-width="1.2"/><circle cx="6" cy="13.5" r="4" fill="#f9f9f9" stroke="#555" stroke-width="1.2"/></svg>
<svg class="r" style="left:417px;top:361px;" width="20" height="18" viewBox="0 0 20 18"><rect x="1.2" y="1.2" width="17.4" height="14.8" rx="1" fill="none" stroke="#555" stroke-width="1.3"/><text x="9.9" y="12.8" text-anchor="middle" font-family="Liberation Serif" font-size="12.5" fill="#555">T</text></svg>
<svg class="r" style="left:292px;top:421.6px;" width="22" height="14" viewBox="0 0 22 14"><circle cx="10.6" cy="3.2" r="2.4" fill="#555"/><g fill="none" stroke="#555" stroke-width="1"><circle cx="3.6" cy="10" r="2.3"/><circle cx="10.6" cy="10" r="2.3"/><circle cx="17.6" cy="10" r="2.3"/></g></svg>
<svg class="r" style="left:355px;top:420.5px;" width="20" height="18" viewBox="0 0 20 18"><path d="M1.2 1.2H17.6V12.4H12L9.8 15.8L7.9 12.4H1.2Z" fill="none" stroke="#555" stroke-width="1.2" stroke-linejoin="round"/></svg>
<svg class="r" style="left:286px;top:479px;" width="15" height="14" viewBox="0 0 15 14"><rect x="0.8" y="0.8" width="12.4" height="11.4" fill="none" stroke="#666" stroke-width="1"/><text x="7" y="10.2" text-anchor="middle" font-family="Liberation Serif" font-size="10" fill="#666">T</text></svg>
<div class="r" style="left:307px;top:474px;width:142px;height:24px;background:#00b180;border-radius:12.0px;"></div>
<div class="t" style="left:320.8px;top:478.56px;font-size:15.4px;color:#ffffff;-webkit-text-stroke:0.25px #ffffff;letter-spacing:0px;">Measure Values</div>
<div class="r" style="left:268px;top:546px;width:194px;height:173px;background:#f9f9f9;border:1px solid #d4d4d4;box-sizing:border-box;"></div>
<div class="t" style="left:276.4px;top:556.64px;font-size:15.3px;color:#404040;">Measure Values</div>
<div class="r" style="left:274px;top:585px;width:182px;height:24px;background:#00b180;border-radius:12.0px;"></div>
<div class="t" style="left:287.3px;top:589.56px;font-size:15.4px;color:#ffffff;-webkit-text-stroke:0.25px #ffffff;letter-spacing:0.35px;">SUM(Discount)</div>
<div class="r" style="left:274px;top:612px;width:182px;height:24px;background:#00b180;border-radius:12.0px;"></div>
<div class="t" style="left:287.3px;top:616.56px;font-size:15.4px;color:#ffffff;-webkit-text-stroke:0.25px #ffffff;letter-spacing:0.35px;">SUM(Profit)</div>
<div class="r" style="left:274px;top:639px;width:182px;height:24px;background:#00b180;border-radius:12.0px;"></div>
<div class="t" style="left:287.3px;top:643.56px;font-size:15.4px;color:#ffffff;-webkit-text-stroke:0.25px #ffffff;letter-spacing:0.35px;">SUM(Quantity)</div>
<div class="r" style="left:274px;top:666px;width:182px;height:24px;background:#00b180;border-radius:12.0px;"></div>
<div class="t" style="left:287.3px;top:670.56px;font-size:15.4px;color:#ffffff;-webkit-text-stroke:0.25px #ffffff;letter-spacing:0.35px;">SUM(Sales)</div>
<div class="r" style="left:468px;top:105px;width:1446px;height:32px;background:#f9f9f9;border:1px solid #d4d4d4;box-sizing:border-box;"></div>
<div class="r" style="left:627px;top:106px;width:1px;height:30px;background:#d4d4d4;"></div>
<div class="t" style="left:496.7px;top:113.94px;font-size:15.3px;color:#333;">Columns</div>
<svg class="r" style="left:476px;top:113px;" width="14" height="14" viewBox="0 0 14 14"><rect x="1.4" y="4.2" width="2" height="8.4" fill="#555"/><rect x="5.8" y="4.2" width="2" height="8.4" fill="#555"/><rect x="10.2" y="4.2" width="2" height="8.4" fill="#555"/><rect x="1.4" y="0.6" width="2" height="2" fill="#555"/><rect x="5.8" y="0.6" width="2" height="2" fill="#555"/><rect x="10.2" y="0.6" width="2" height="2" fill="#555"/></svg>
<div class="r" style="left:468px;top:143px;width:1446px;height:32px;background:#f9f9f9;border:1px solid #d4d4d4;box-sizing:border-box;"></div>
<div class="r" style="left:627px;top:144px;width:1px;height:30px;background:#d4d4d4;"></div>
<div class="t" style="left:496.7px;top:151.84px;font-size:15.3px;color:#333;">Rows</div>
<svg class="r" style="left:476px;top:151px;" width="14" height="14" viewBox="0 0 14 14"><rect x="0.8" y="2.2" width="1.8" height="1.8" fill="#555"/><rect x="4.2" y="2.2" width="8.4" height="1.8" fill="#555"/><rect x="0.8" y="6.2" width="1.8" height="1.8" fill="#555"/><rect x="4.2" y="6.2" width="8.4" height="1.8" fill="#555"/><rect x="0.8" y="10.2" width="1.8" height="1.8" fill="#555"/><rect x="4.2" y="10.2" width="8.4" height="1.8" fill="#555"/></svg>
<div class="r" style="left:630px;top:109px;width:178px;height:24px;background:#4996b2;border-radius:12.0px;"></div>
<div class="t" style="left:643px;top:113.56px;font-size:15.4px;color:#ffffff;-webkit-text-stroke:0.25px #ffffff;letter-spacing:0px;">Measure Names</div>
<div class="r" style="left:630px;top:147px;width:178px;height:24px;background:#4996b2;border-radius:12.0px;"></div>
<div class="t" style="left:659.6px;top:151.56px;font-size:15.4px;color:#ffffff;-webkit-text-stroke:0.25px #ffffff;letter-spacing:0px;">Category</div>
<svg class="r" style="left:644.3px;top:154.6px;" width="9" height="9" viewBox="0 0 9 9"><rect x="0.5" y="0.5" width="8" height="8" fill="none" stroke="#fff" stroke-width="1"/><path d="M2.3 4.5H6.7" stroke="#fff" stroke-width="1"/></svg>
<div class="r" style="left:810px;top:147px;width:178px;height:24px;background:#4996b2;border-radius:12.0px;"></div>
<div class="t" style="left:840.6px;top:151.56px;font-size:15.4px;color:#ffffff;-webkit-text-stroke:0.25px #ffffff;letter-spacing:0px;">Sub-Category</div>
<svg class="r" style="left:824px;top:154.6px;" width="9" height="9" viewBox="0 0 9 9"><rect x="0.5" y="0.5" width="8" height="8" fill="none" stroke="#fff" stroke-width="1"/><path d="M2.3 4.5H6.7" stroke="#fff" stroke-width="1"/><path d="M4.5 2.3V6.7" stroke="#fff" stroke-width="1"/></svg>
<div class="r" style="left:468px;top:181px;width:1446px;height:780px;background:#ffffff;border:1px solid #d4d4d4;box-sizing:border-box;"></div>
<div class="t" style="left:480.8px;top:199.17px;font-size:25.3px;color:#666666;">Sheet 1</div>
<div class="r" style="left:579px;top:278px;width:420px;height:21px;background:#f4f4f4;"></div>
<div class="r" style="left:579px;top:320px;width:420px;height:21px;background:#f4f4f4;"></div>
<div class="r" style="left:579px;top:362px;width:420px;height:21px;background:#f4f4f4;"></div>
<div class="r" style="left:579px;top:404px;width:420px;height:21px;background:#f4f4f4;"></div>
<div class="r" style="left:579px;top:446px;width:420px;height:21px;background:#f4f4f4;"></div>
<div class="r" style="left:579px;top:488px;width:420px;height:21px;background:#f4f4f4;"></div>
<div class="r" style="left:579px;top:530px;width:420px;height:21px;background:#f4f4f4;"></div>
<div class="r" style="left:579px;top:572px;width:420px;height:21px;background:#f4f4f4;"></div>
<div class="r" style="left:579px;top:614px;width:420px;height:21px;background:#f4f4f4;"></div>
<div class="r" style="left:579px;top:656px;width:420px;height:21px;background:#f4f4f4;"></div>
<div class="r" style="left:479px;top:257px;width:520px;height:1px;background:#d2d2d2;"></div>
<div class="r" style="left:479px;top:362px;width:520px;height:1px;background:#d2d2d2;"></div>
<div class="r" style="left:479px;top:572px;width:520px;height:1px;background:#d2d2d2;"></div>
<div class="r" style="left:479px;top:677px;width:520px;height:1px;background:#d2d2d2;"></div>
<div class="r" style="left:479px;top:698px;width:520px;height:1px;background:#d2d2d2;"></div>
<div class="r" style="left:579px;top:341px;width:420px;height:1px;background:#d2d2d2;"></div>
<div class="r" style="left:579px;top:551px;width:420px;height:1px;background:#d2d2d2;"></div>
<div class="r" style="left:579px;top:656px;width:420px;height:1px;background:#d2d2d2;"></div>
<div class="r" style="left:679px;top:237px;width:1px;height:462px;background:#d2d2d2;"></div>
<div class="r" style="left:999px;top:237px;width:1px;height:462px;background:#d2d2d2;"></div>
<div class="t" style="left:485.5px;top:240.04px;font-size:15.3px;color:#333333;letter-spacing:0.15px;">Category</div>
<div class="t" style="left:585.7px;top:240.04px;font-size:15.3px;color:#333333;">Sub-Catego..</div>
<div class="t" style="right:1165px;top:240.04px;font-size:15.3px;color:#333333;letter-spacing:0.2px;">Discount</div>
<div class="t" style="right:1086px;top:240.04px;font-size:15.3px;color:#333333;letter-spacing:0.2px;">Profit</div>
<div class="t" style="right:1006px;top:240.04px;font-size:15.3px;color:#333333;letter-spacing:0.2px;">Quantity</div>
<div class="t" style="right:926px;top:240.04px;font-size:15.3px;color:#333333;letter-spacing:0.2px;">Sales</div>
<div class="t" style="left:485.5px;top:259.94px;font-size:15.3px;color:#2a2a2a;-webkit-text-stroke:0.28px #2a2a2a;letter-spacing:0.55px;">Furniture</div>
<div class="t" style="left:585.5px;top:259.94px;font-size:15.3px;color:#6e6e6e;">Bookcases</div>
<div class="t" style="right:1165px;top:259.94px;font-size:15.3px;color:#484848;letter-spacing:0.6px;margin-right:-0.6px;">48</div>
<div class="t" style="right:1086px;top:259.94px;font-size:15.3px;color:#484848;letter-spacing:0.6px;margin-right:-0.6px;">-3,473</div>
<div class="t" style="right:1006px;top:259.94px;font-size:15.3px;color:#484848;letter-spacing:0.6px;margin-right:-0.6px;">868</div>
<div class="t" style="right:926px;top:259.94px;font-size:15.3px;color:#484848;letter-spacing:0.6px;margin-right:-0.6px;">114,880</div>
<div class="t" style="left:585.5px;top:280.94px;font-size:15.3px;color:#6e6e6e;">Chairs</div>
<div class="t" style="right:1165px;top:280.94px;font-size:15.3px;color:#484848;letter-spacing:0.6px;margin-right:-0.6px;">105</div>
<div class="t" style="right:1086px;top:280.94px;font-size:15.3px;color:#484848;letter-spacing:0.6px;margin-right:-0.6px;">26,590</div>
<div class="t" style="right:1006px;top:280.94px;font-size:15.3px;color:#484848;letter-spacing:0.6px;margin-right:-0.6px;">2,356</div>
<div class="t" style="right:926px;top:280.94px;font-size:15.3px;color:#484848;letter-spacing:0.6px;margin-right:-0.6px;">328,449</div>
<div class="t" style="left:585.5px;top:301.94px;font-size:15.3px;color:#6e6e6e;">Furnishings</div>
<div class="t" style="right:1165px;top:301.94px;font-size:15.3px;color:#484848;letter-spacing:0.6px;margin-right:-0.6px;">132</div>
<div class="t" style="right:1086px;top:301.94px;font-size:15.3px;color:#484848;letter-spacing:0.6px;margin-right:-0.6px;">13,059</div>
<div class="t" style="right:1006px;top:301.94px;font-size:15.3px;color:#484848;letter-spacing:0.6px;margin-right:-0.6px;">3,563</div>
<div class="t" style="right:926px;top:301.94px;font-size:15.3px;color:#484848;letter-spacing:0.6px;margin-right:-0.6px;">91,705</div>
<div class="t" style="left:585.5px;top:322.94px;font-size:15.3px;color:#6e6e6e;">Tables</div>
<div class="t" style="right:1165px;top:322.94px;font-size:15.3px;color:#484848;letter-spacing:0.6px;margin-right:-0.6px;">83</div>
<div class="t" style="right:1086px;top:322.94px;font-size:15.3px;color:#484848;letter-spacing:0.6px;margin-right:-0.6px;">-17,725</div>
<div class="t" style="right:1006px;top:322.94px;font-size:15.3px;color:#484848;letter-spacing:0.6px;margin-right:-0.6px;">1,241</div>
<div class="t" style="right:926px;top:322.94px;font-size:15.3px;color:#484848;letter-spacing:0.6px;margin-right:-0.6px;">206,966</div>
<div class="t" style="left:585.5px;top:343.94px;font-size:15.3px;color:#6e6e6e;">Total</div>
<div class="t" style="right:1165px;top:343.94px;font-size:15.3px;color:#2a2a2a;-webkit-text-stroke:0.28px #2a2a2a;letter-spacing:0.6px;margin-right:-0.6px;">369</div>
<div class="t" style="right:1086px;top:343.94px;font-size:15.3px;color:#2a2a2a;-webkit-text-stroke:0.28px #2a2a2a;letter-spacing:0.6px;margin-right:-0.6px;">18,451</div>
<div class="t" style="right:1006px;top:343.94px;font-size:15.3px;color:#2a2a2a;-webkit-text-stroke:0.28px #2a2a2a;letter-spacing:0.6px;margin-right:-0.6px;">8,028</div>
<div class="t" style="right:926px;top:343.94px;font-size:15.3px;color:#2a2a2a;-webkit-text-stroke:0.28px #2a2a2a;letter-spacing:0.6px;margin-right:-0.6px;">742,000</div>
<div class="t" style="left:485.5px;top:364.94px;font-size:15.3px;color:#2a2a2a;-webkit-text-stroke:0.28px #2a2a2a;letter-spacing:0.55px;">Office</div>
<div class="t" style="left:585.5px;top:364.94px;font-size:15.3px;color:#6e6e6e;">Appliances</div>
<div class="t" style="right:1165px;top:364.94px;font-size:15.3px;color:#484848;letter-spacing:0.6px;margin-right:-0.6px;">78</div>
<div class="t" style="right:1086px;top:364.94px;font-size:15.3px;color:#484848;letter-spacing:0.6px;margin-right:-0.6px;">18,138</div>
<div class="t" style="right:1006px;top:364.94px;font-size:15.3px;color:#484848;letter-spacing:0.6px;margin-right:-0.6px;">1,729</div>
<div class="t" style="right:926px;top:364.94px;font-size:15.3px;color:#484848;letter-spacing:0.6px;margin-right:-0.6px;">107,532</div>
<div class="t" style="left:485.5px;top:385.94px;font-size:15.3px;color:#2a2a2a;-webkit-text-stroke:0.28px #2a2a2a;letter-spacing:0.55px;">Supplies</div>
<div class="t" style="left:585.5px;top:385.94px;font-size:15.3px;color:#6e6e6e;">Art</div>
<div class="t" style="right:1165px;top:385.94px;font-size:15.3px;color:#484848;letter-spacing:0.6px;margin-right:-0.6px;">60</div>
<div class="t" style="right:1086px;top:385.94px;font-size:15.3px;color:#484848;letter-spacing:0.6px;margin-right:-0.6px;">6,528</div>
<div class="t" style="right:1006px;top:385.94px;font-size:15.3px;color:#484848;letter-spacing:0.6px;margin-right:-0.6px;">3,000</div>
<div class="t" style="right:926px;top:385.94px;font-size:15.3px;color:#484848;letter-spacing:0.6px;margin-right:-0.6px;">27,119</div>
<div class="t" style="left:585.5px;top:406.94px;font-size:15.3px;color:#6e6e6e;">Binders</div>
<div class="t" style="right:1165px;top:406.94px;font-size:15.3px;color:#484848;letter-spacing:0.6px;margin-right:-0.6px;">567</div>
<div class="t" style="right:1086px;top:406.94px;font-size:15.3px;color:#484848;letter-spacing:0.6px;margin-right:-0.6px;">30,222</div>
<div class="t" style="right:1006px;top:406.94px;font-size:15.3px;color:#484848;letter-spacing:0.6px;margin-right:-0.6px;">5,974</div>
<div class="t" style="right:926px;top:406.94px;font-size:15.3px;color:#484848;letter-spacing:0.6px;margin-right:-0.6px;">203,413</div>
<div class="t" style="left:585.5px;top:427.94px;font-size:15.3px;color:#6e6e6e;">Envelopes</div>
<div class="t" style="right:1165px;top:427.94px;font-size:15.3px;color:#484848;letter-spacing:0.6px;margin-right:-0.6px;">20</div>
<div class="t" style="right:1086px;top:427.94px;font-size:15.3px;color:#484848;letter-spacing:0.6px;margin-right:-0.6px;">6,964</div>
<div class="t" style="right:1006px;top:427.94px;font-size:15.3px;color:#484848;letter-spacing:0.6px;margin-right:-0.6px;">906</div>
<div class="t" style="right:926px;top:427.94px;font-size:15.3px;color:#484848;letter-spacing:0.6px;margin-right:-0.6px;">16,476</div>
<div class="t" style="left:585.5px;top:448.94px;font-size:15.3px;color:#6e6e6e;">Fasteners</div>
<div class="t" style="right:1165px;top:448.94px;font-size:15.3px;color:#484848;letter-spacing:0.6px;margin-right:-0.6px;">18</div>
<div class="t" style="right:1086px;top:448.94px;font-size:15.3px;color:#484848;letter-spacing:0.6px;margin-right:-0.6px;">950</div>
<div class="t" style="right:1006px;top:448.94px;font-size:15.3px;color:#484848;letter-spacing:0.6px;margin-right:-0.6px;">914</div>
<div class="t" style="right:926px;top:448.94px;font-size:15.3px;color:#484848;letter-spacing:0.6px;margin-right:-0.6px;">3,024</div>
<div class="t" style="left:585.5px;top:469.94px;font-size:15.3px;color:#6e6e6e;">Labels</div>
<div class="t" style="right:1165px;top:469.94px;font-size:15.3px;color:#484848;letter-spacing:0.6px;margin-right:-0.6px;">25</div>
<div class="t" style="right:1086px;top:469.94px;font-size:15.3px;color:#484848;letter-spacing:0.6px;margin-right:-0.6px;">5,546</div>
<div class="t" style="right:1006px;top:469.94px;font-size:15.3px;color:#484848;letter-spacing:0.6px;margin-right:-0.6px;">1,400</div>
<div class="t" style="right:926px;top:469.94px;font-size:15.3px;color:#484848;letter-spacing:0.6px;margin-right:-0.6px;">12,486</div>
<div class="t" style="left:585.5px;top:490.94px;font-size:15.3px;color:#6e6e6e;">Paper</div>
<div class="t" style="right:1165px;top:490.94px;font-size:15.3px;color:#484848;letter-spacing:0.6px;margin-right:-0.6px;">103</div>
<div class="t" style="right:1086px;top:490.94px;font-size:15.3px;color:#484848;letter-spacing:0.6px;margin-right:-0.6px;">34,054</div>
<div class="t" style="right:1006px;top:490.94px;font-size:15.3px;color:#484848;letter-spacing:0.6px;margin-right:-0.6px;">5,178</div>
<div class="t" style="right:926px;top:490.94px;font-size:15.3px;color:#484848;letter-spacing:0.6px;margin-right:-0.6px;">78,479</div>
<div class="t" style="left:585.5px;top:511.94px;font-size:15.3px;color:#6e6e6e;">Storage</div>
<div class="t" style="right:1165px;top:511.94px;font-size:15.3px;color:#484848;letter-spacing:0.6px;margin-right:-0.6px;">63</div>
<div class="t" style="right:1086px;top:511.94px;font-size:15.3px;color:#484848;letter-spacing:0.6px;margin-right:-0.6px;">21,279</div>
<div class="t" style="right:1006px;top:511.94px;font-size:15.3px;color:#484848;letter-spacing:0.6px;margin-right:-0.6px;">3,158</div>
<div class="t" style="right:926px;top:511.94px;font-size:15.3px;color:#484848;letter-spacing:0.6px;margin-right:-0.6px;">223,844</div>
<div class="t" style="left:585.5px;top:532.94px;font-size:15.3px;color:#6e6e6e;">Supplies</div>
<div class="t" style="right:1165px;top:532.94px;font-size:15.3px;color:#484848;letter-spacing:0.6px;margin-right:-0.6px;">15</div>
<div class="t" style="right:1086px;top:532.94px;font-size:15.3px;color:#484848;letter-spacing:0.6px;margin-right:-0.6px;">-1,189</div>
<div class="t" style="right:1006px;top:532.94px;font-size:15.3px;color:#484848;letter-spacing:0.6px;margin-right:-0.6px;">647</div>
<div class="t" style="right:926px;top:532.94px;font-size:15.3px;color:#484848;letter-spacing:0.6px;margin-right:-0.6px;">46,674</div>
<div class="t" style="left:585.5px;top:553.94px;font-size:15.3px;color:#6e6e6e;">Total</div>
<div class="t" style="right:1165px;top:553.94px;font-size:15.3px;color:#2a2a2a;-webkit-text-stroke:0.28px #2a2a2a;letter-spacing:0.6px;margin-right:-0.6px;">948</div>
<div class="t" style="right:1086px;top:553.94px;font-size:15.3px;color:#2a2a2a;-webkit-text-stroke:0.28px #2a2a2a;letter-spacing:0.6px;margin-right:-0.6px;">122,491</div>
<div class="t" style="right:1006px;top:553.94px;font-size:15.3px;color:#2a2a2a;-webkit-text-stroke:0.28px #2a2a2a;letter-spacing:0.6px;margin-right:-0.6px;">22,906</div>
<div class="t" style="right:926px;top:553.94px;font-size:15.3px;color:#2a2a2a;-webkit-text-stroke:0.28px #2a2a2a;letter-spacing:0.6px;margin-right:-0.6px;">719,047</div>
<div class="t" style="left:485.5px;top:574.94px;font-size:15.3px;color:#2a2a2a;-webkit-text-stroke:0.28px #2a2a2a;letter-spacing:0.55px;">Technology</div>
<div class="t" style="left:585.5px;top:574.94px;font-size:15.3px;color:#6e6e6e;">Accessories</div>
<div class="t" style="right:1165px;top:574.94px;font-size:15.3px;color:#484848;letter-spacing:0.6px;margin-right:-0.6px;">61</div>
<div class="t" style="right:1086px;top:574.94px;font-size:15.3px;color:#484848;letter-spacing:0.6px;margin-right:-0.6px;">41,937</div>
<div class="t" style="right:1006px;top:574.94px;font-size:15.3px;color:#484848;letter-spacing:0.6px;margin-right:-0.6px;">2,976</div>
<div class="t" style="right:926px;top:574.94px;font-size:15.3px;color:#484848;letter-spacing:0.6px;margin-right:-0.6px;">167,380</div>
<div class="t" style="left:585.5px;top:595.94px;font-size:15.3px;color:#6e6e6e;">Copiers</div>
<div class="t" style="right:1165px;top:595.94px;font-size:15.3px;color:#484848;letter-spacing:0.6px;margin-right:-0.6px;">11</div>
<div class="t" style="right:1086px;top:595.94px;font-size:15.3px;color:#484848;letter-spacing:0.6px;margin-right:-0.6px;">55,618</div>
<div class="t" style="right:1006px;top:595.94px;font-size:15.3px;color:#484848;letter-spacing:0.6px;margin-right:-0.6px;">234</div>
<div class="t" style="right:926px;top:595.94px;font-size:15.3px;color:#484848;letter-spacing:0.6px;margin-right:-0.6px;">149,528</div>
<div class="t" style="left:585.5px;top:616.94px;font-size:15.3px;color:#6e6e6e;">Machines</div>
<div class="t" style="right:1165px;top:616.94px;font-size:15.3px;color:#484848;letter-spacing:0.6px;margin-right:-0.6px;">35</div>
<div class="t" style="right:1086px;top:616.94px;font-size:15.3px;color:#484848;letter-spacing:0.6px;margin-right:-0.6px;">3,385</div>
<div class="t" style="right:1006px;top:616.94px;font-size:15.3px;color:#484848;letter-spacing:0.6px;margin-right:-0.6px;">440</div>
<div class="t" style="right:926px;top:616.94px;font-size:15.3px;color:#484848;letter-spacing:0.6px;margin-right:-0.6px;">189,239</div>
<div class="t" style="left:585.5px;top:637.94px;font-size:15.3px;color:#6e6e6e;">Phones</div>
<div class="t" style="right:1165px;top:637.94px;font-size:15.3px;color:#484848;letter-spacing:0.6px;margin-right:-0.6px;">137</div>
<div class="t" style="right:1086px;top:637.94px;font-size:15.3px;color:#484848;letter-spacing:0.6px;margin-right:-0.6px;">44,516</div>
<div class="t" style="right:1006px;top:637.94px;font-size:15.3px;color:#484848;letter-spacing:0.6px;margin-right:-0.6px;">3,289</div>
<div class="t" style="right:926px;top:637.94px;font-size:15.3px;color:#484848;letter-spacing:0.6px;margin-right:-0.6px;">330,007</div>
<div class="t" style="left:585.5px;top:658.94px;font-size:15.3px;color:#6e6e6e;">Total</div>
<div class="t" style="right:1165px;top:658.94px;font-size:15.3px;color:#2a2a2a;-webkit-text-stroke:0.28px #2a2a2a;letter-spacing:0.6px;margin-right:-0.6px;">244</div>
<div class="t" style="right:1086px;top:658.94px;font-size:15.3px;color:#2a2a2a;-webkit-text-stroke:0.28px #2a2a2a;letter-spacing:0.6px;margin-right:-0.6px;">145,455</div>
<div class="t" style="right:1006px;top:658.94px;font-size:15.3px;color:#2a2a2a;-webkit-text-stroke:0.28px #2a2a2a;letter-spacing:0.6px;margin-right:-0.6px;">6,939</div>
<div class="t" style="right:926px;top:658.94px;font-size:15.3px;color:#2a2a2a;-webkit-text-stroke:0.28px #2a2a2a;letter-spacing:0.6px;margin-right:-0.6px;">836,154</div>
<div class="t" style="left:485.5px;top:679.94px;font-size:15.3px;color:#2a2a2a;-webkit-text-stroke:0.28px #2a2a2a;letter-spacing:0.55px;">Grand Total</div>
<div class="t" style="right:1165px;top:679.94px;font-size:15.3px;color:#2a2a2a;-webkit-text-stroke:0.28px #2a2a2a;letter-spacing:0.6px;margin-right:-0.6px;">1,561</div>
<div class="t" style="right:1086px;top:679.94px;font-size:15.3px;color:#2a2a2a;-webkit-text-stroke:0.28px #2a2a2a;letter-spacing:0.6px;margin-right:-0.6px;">286,397</div>
<div class="t" style="right:1006px;top:679.94px;font-size:15.3px;color:#2a2a2a;-webkit-text-stroke:0.28px #2a2a2a;letter-spacing:0.6px;margin-right:-0.6px;">37,873</div>
<div class="t" style="right:926px;top:679.94px;font-size:15.3px;color:#2a2a2a;-webkit-text-stroke:0.28px #2a2a2a;letter-spacing:0.6px;margin-right:-0.6px;">2,297,201</div>
<div class="r" style="left:0px;top:967px;width:1920px;height:1px;background:#cfcfcf;"></div>
<div class="r" style="left:0px;top:968px;width:1920px;height:36px;background:#e6e6e6;"></div>
<div class="r" style="left:162px;top:968px;width:70px;height:36px;background:#fafafa;"></div>
<div class="r" style="left:162px;top:968px;width:1px;height:36px;background:#d0d0d0;"></div>
<div class="r" style="left:231px;top:968px;width:1px;height:36px;background:#d0d0d0;"></div>
<div class="r" style="left:263px;top:968px;width:1px;height:36px;background:#d0d0d0;"></div>
<div class="r" style="left:295px;top:968px;width:1px;height:36px;background:#d0d0d0;"></div>
<div class="r" style="left:327px;top:968px;width:1px;height:36px;background:#d0d0d0;"></div>
<div class="r" style="left:0px;top:1004px;width:1920px;height:1px;background:#d0d0d0;"></div>
<div class="r" style="left:0px;top:1005px;width:1920px;height:21px;background:#eaeaea;"></div>
<svg class="r" style="left:10px;top:979px;" width="10" height="14" viewBox="0 0 10 14"><rect x="0.8" y="0.8" width="7.4" height="12" rx="3" fill="none" stroke="#777" stroke-width="1.1"/><path d="M0.8 3.6Q4.5 5.6 8.2 3.6" fill="none" stroke="#777" stroke-width="1"/></svg>
<div class="t" style="left:25px;top:978.93px;font-size:15.2px;color:#555;">Data Source</div>
<div class="t" style="left:170.8px;top:979.60px;font-size:14.4px;color:#555;font-weight:700;">Sheet 1</div>
<svg class="r" style="left:241px;top:978.6px;" width="20" height="20" viewBox="0 0 20 20"><path d="M8 12.6H0.8V0.8H11.8V7" fill="none" stroke="#666" stroke-width="1.1"/><path d="M3.4 10V6.6M5.8 10V4.4M8.2 10V5.6" stroke="#666" stroke-width="1"/><path d="M8.4 12.2H15.4M11.9 8.7V15.7" stroke="#666" stroke-width="2.1"/></svg>
<svg class="r" style="left:273px;top:978.6px;" width="20" height="20" viewBox="0 0 20 20"><path d="M8 12.6H0.8V0.8H11.8V7" fill="none" stroke="#666" stroke-width="1.1"/><path d="M0.8 6.6H11.8M6.3 0.8V12.6" stroke="#666" stroke-width="1.1"/><path d="M8.4 12.2H15.4M11.9 8.7V15.7" stroke="#666" stroke-width="2.1"/></svg>
<svg class="r" style="left:305px;top:978.6px;" width="20" height="20" viewBox="0 0 20 20"><path d="M8 11.2L5 12.6V2L0.8 0.8V11.2L5 12.6M5 2L11 0.8V7" fill="none" stroke="#666" stroke-width="1.1" stroke-linejoin="round"/><path d="M8.4 12.2H15.4M11.9 8.7V15.7" stroke="#666" stroke-width="2.1"/></svg>
<div class="t" style="left:3px;top:1010.90px;font-size:13.1px;color:#333;">84 marks</div>
<div class="t" style="left:80px;top:1010.90px;font-size:13.1px;color:#333;">21 rows by 4 columns</div>
<div class="t" style="left:228px;top:1010.90px;font-size:13.1px;color:#333;">SUM of Measure Values: 2,623,032</div>
<div class="r" style="left:1502px;top:1005px;width:1px;height:21px;background:#d0d0d0;"></div>
<div class="r" style="left:1658px;top:1005px;width:1px;height:21px;background:#d0d0d0;"></div>
<div class="r" style="left:1690px;top:1005px;width:1px;height:21px;background:#d0d0d0;"></div>
<div class="r" style="left:1722px;top:1005px;width:1px;height:21px;background:#d0d0d0;"></div>
<div class="r" style="left:1779px;top:1005px;width:1px;height:21px;background:#d0d0d0;"></div>
<div class="r" style="left:1850px;top:1005px;width:1px;height:21px;background:#d0d0d0;"></div>
<svg class="r" style="left:1508px;top:1008px;" width="12" height="15" viewBox="0 0 12 15"><circle cx="6" cy="4.2" r="2.8" fill="none" stroke="#555" stroke-width="1"/><path d="M1 14V11.6A2.6 2.6 0 0 1 3.6 9H8.4A2.6 2.6 0 0 1 11 11.6V14Z" fill="none" stroke="#555" stroke-width="1"/></svg>
<div class="t" style="left:1528px;top:1010.90px;font-size:13.1px;color:#333;">emma.marler</div>
<svg class="r" style="left:1640px;top:1014px;" width="7" height="4" viewBox="0 0 7 4"><path d="M0 0H7L3.5 4Z" fill="#111"/></svg>
<svg class="r" style="left:1787px;top:1012px;" width="10" height="10" viewBox="0 0 10 10"><rect x="0.6" y="1" width="1.2" height="7.6" fill="#b4b4b4"/><path d="M7.2 1V8.6L2.2 4.8Z" fill="#b4b4b4"/></svg>
<svg class="r" style="left:1804px;top:1012px;" width="10" height="10" viewBox="0 0 10 10"><path d="M5.2 1V8.6L0.6 4.8Z" fill="#b4b4b4"/></svg>
<svg class="r" style="left:1820.6px;top:1012px;" width="10" height="10" viewBox="0 0 10 10"><path d="M0.6 1V8.6L5.2 4.8Z" fill="#b4b4b4"/></svg>
<svg class="r" style="left:1835.8px;top:1012px;" width="10" height="10" viewBox="0 0 10 10"><path d="M0.4 1V8.6L5.4 4.8Z" fill="#b4b4b4"/><rect x="5.8" y="1" width="1.2" height="7.6" fill="#b4b4b4"/></svg>
<svg class="r" style="left:1859px;top:1011px;" width="11" height="11" viewBox="0 0 11 11"><rect x="0" y="0" width="2.8" height="2.8" rx="0.4" fill="#b8b8b8"/><rect x="0" y="4.1" width="2.8" height="2.8" rx="0.4" fill="#b8b8b8"/><rect x="0" y="8.2" width="2.8" height="2.8" rx="0.4" fill="#b8b8b8"/><rect x="4.1" y="0" width="2.8" height="2.8" rx="0.4" fill="#b8b8b8"/><rect x="4.1" y="4.1" width="2.8" height="2.8" rx="0.4" fill="#b8b8b8"/><rect x="4.1" y="8.2" width="2.8" height="2.8" rx="0.4" fill="#b8b8b8"/><rect x="8.2" y="0" width="2.8" height="2.8" rx="0.4" fill="#b8b8b8"/><rect x="8.2" y="4.1" width="2.8" height="2.8" rx="0.4" fill="#b8b8b8"/><rect x="8.2" y="8.2" width="2.8" height="2.8" rx="0.4" fill="#b8b8b8"/></svg>
<svg class="r" style="left:1881px;top:1011px;" width="11" height="11" viewBox="0 0 11 11"><rect x="0" y="0" width="11" height="6.6" rx="0.4" fill="#b8b8b8"/><rect x="0" y="8.2" width="2.8" height="2.8" rx="0.4" fill="#b8b8b8"/><rect x="4.1" y="8.2" width="2.8" height="2.8" rx="0.4" fill="#b8b8b8"/><rect x="8.2" y="8.2" width="2.8" height="2.8" rx="0.4" fill="#b8b8b8"/></svg>
<div class="r" style="left:1903px;top:1011px;width:11px;height:11px;background:#6a6a6a;border-radius:1px;"></div>
<div class="r" style="left:1918px;top:741px;width:2px;height:19px;background:#ffffff;"></div>
<div class="r" style="left:1919px;top:742px;width:1px;height:17px;background:#111111;"></div>
</body></html>
